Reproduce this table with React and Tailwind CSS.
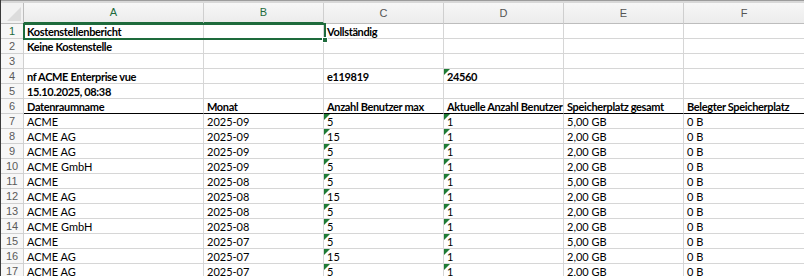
import React from 'react';

const COLS = ['A', 'B', 'C', 'D', 'E', 'F'];
const WIDTHS = 'grid-cols-[23px_180px_120px_120px_120px_120px_121px]';

const data = [
  ['ACME', '2025-09', '5', '1', '5,00 GB', '0 B'],
  ['ACME AG', '2025-09', '15', '1', '2,00 GB', '0 B'],
  ['ACME AG', '2025-09', '5', '1', '2,00 GB', '0 B'],
  ['ACME GmbH', '2025-09', '5', '1', '2,00 GB', '0 B'],
  ['ACME', '2025-08', '5', '1', '5,00 GB', '0 B'],
  ['ACME AG', '2025-08', '15', '1', '2,00 GB', '0 B'],
  ['ACME AG', '2025-08', '5', '1', '2,00 GB', '0 B'],
  ['ACME GmbH', '2025-08', '5', '1', '2,00 GB', '0 B'],
  ['ACME', '2025-07', '5', '1', '5,00 GB', '0 B'],
  ['ACME AG', '2025-07', '15', '1', '2,00 GB', '0 B'],
  ['ACME AG', '2025-07', '5', '1', '2,00 GB', '0 B'],
];

// each row: cells A..F, { v, bold, flag } where flag = number stored as text
const rows = [
  [{ v: 'Kostenstellenbericht', bold: true }, {}, { v: 'Vollständig', bold: true }, {}, {}, {}],
  [{ v: 'Keine Kostenstelle', bold: true }, {}, {}, {}, {}, {}],
  [{}, {}, {}, {}, {}, {}],
  [{ v: 'nf ACME Enterprise vue', bold: true }, {}, { v: 'e119819', bold: true }, { v: '24560', bold: true, flag: true }, {}, {}],
  [{ v: '15.10.2025, 08:38', bold: true }, {}, {}, {}, {}, {}],
  ['Datenraumname', 'Monat', 'Anzahl Benutzer max', 'Aktuelle Anzahl Benutzer', 'Speicherplatz gesamt', 'Belegter Speicherplatz'].map((v) => ({ v, bold: true, head: true })),
  ...data.map((r) => r.map((v, i) => ({ v, flag: i === 2 || i === 3 }))),
];

function Flag() {
  return (
    <svg className="absolute left-0 top-0" width="6" height="6" viewBox="0 0 6 6">
      <polygon points="0,0 6,0 0,6" fill="#1e7b34" />
    </svg>
  );
}

function Cell({ cell }) {
  return (
    <div
      className={`relative h-[15px] pl-[3px] border-r border-[#d6d6d6] overflow-visible whitespace-nowrap text-[11px] leading-[15px] text-black ${
        cell.head ? 'border-b border-b-black' : 'border-b'
      } ${cell.bold ? 'font-bold tracking-[-0.35px]' : ''}`}
    >
      {cell.flag && <Flag />}
      {cell.v}
    </div>
  );
}

export default function App() {
  return (
    <div className="relative w-[804px] h-[276px] overflow-hidden bg-white font-['Lato',sans-serif] border-l border-[#3a3a3a]">
      <div className="h-[3px] border-t border-[#9c9c9c] bg-[#d8d8d8]" />
      <div className={`grid ${WIDTHS}`}>
        {/* column letters */}
        <div className="relative h-[21px] bg-[#f2f2f2] border-r border-b border-[#bdbdbd]">
          <svg className="absolute right-[2px] bottom-[2px]" width="14" height="14" viewBox="0 0 14 14">
            <polygon points="14,0 14,14 0,14" fill="#dcdcdc" />
          </svg>
        </div>
        {COLS.map((c, i) => (
          <div
            key={c}
            className={`h-[21px] flex items-center justify-center bg-gradient-to-b from-[#f7f7f7] to-[#ececec] border-r border-[#cfcfcf] text-[11px] font-['Liberation_Sans',sans-serif] ${
              i < 2 ? 'text-[#1e6b3c] border-b-2 border-b-[#1e6b3c]' : 'text-[#555] border-b border-b-[#bdbdbd]'
            }`}
          >
            {c}
          </div>
        ))}

        {rows.map((r, ri) => (
          <React.Fragment key={ri}>
            <div
              className={`h-[15px] flex items-center justify-center bg-[#f7f7f7] border-r border-b border-[#d0d0d0] text-[11px] font-['Liberation_Sans',sans-serif] ${
                ri === 0 ? 'text-[#1e6b3c]' : 'text-[#5a5a5a]'
              }`}
            >
              {ri + 1}
            </div>
            {r.map((cell, ci) => (
              <Cell key={ci} cell={cell} />
            ))}
          </React.Fragment>
        ))}
      </div>

      {/* selection A1:B1 */}
      <div className="absolute left-[22px] top-[23px] w-[303px] h-[17px] border-2 border-[#1e6b3c]" />
      <div className="absolute left-[321px] top-[37px] w-[6px] h-[6px] bg-[#1e6b3c] border border-white" />
    </div>
  );
}
